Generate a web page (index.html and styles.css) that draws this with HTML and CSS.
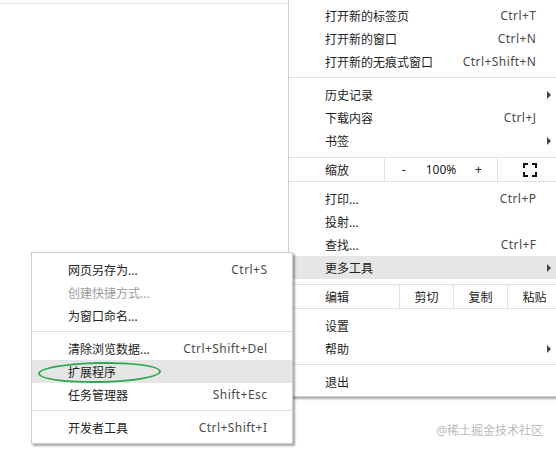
FILE: index.html
```html
<!DOCTYPE html>
<html lang="zh-CN">
<head>
    <meta charset="UTF-8">
    <meta name="viewport" content="width=device-width, initial-scale=1.0">
    <title>更多工具</title>
    <link rel="stylesheet" href="styles.css">
</head>
<body>
    <div class="page">
        <div class="page-line"></div>

        <!-- main browser menu -->
        <div class="menu main-menu">
            <div class="item"><span class="label">打开新的标签页</span><span class="key">Ctrl+T</span></div>
            <div class="item"><span class="label">打开新的窗口</span><span class="key">Ctrl+N</span></div>
            <div class="item"><span class="label">打开新的无痕式窗口</span><span class="key">Ctrl+Shift+N</span></div>
            <div class="sep"></div>
            <div class="item has-sub"><span class="label">历史记录</span></div>
            <div class="item"><span class="label">下载内容</span><span class="key">Ctrl+J</span></div>
            <div class="item has-sub"><span class="label">书签</span></div>
            <div class="split-row">
                <span class="label">缩放</span>
                <div class="cell zoom-ctrl">
                    <span>-</span>
                    <span>100%</span>
                    <span>+</span>
                </div>
                <div class="cell fullscreen">
                    <svg width="14" height="14" viewBox="0 0 14 14">
                        <path d="M1 5V1H5M9 1H13V5M13 9V13H9M5 13H1V9" fill="none" stroke="#111" stroke-width="2"/>
                    </svg>
                </div>
            </div>
            <div class="item"><span class="label">打印...</span><span class="key">Ctrl+P</span></div>
            <div class="item"><span class="label">投射...</span></div>
            <div class="item"><span class="label">查找...</span><span class="key">Ctrl+F</span></div>
            <div class="item has-sub active"><span class="label">更多工具</span></div>
            <div class="split-row">
                <span class="label">编辑</span>
                <div class="cell edit-cell">剪切</div>
                <div class="cell edit-cell">复制</div>
                <div class="cell edit-cell">粘贴</div>
            </div>
            <div class="item"><span class="label">设置</span></div>
            <div class="item has-sub"><span class="label">帮助</span></div>
            <div class="sep"></div>
            <div class="item"><span class="label">退出</span></div>
        </div>

        <!-- "more tools" submenu -->
        <div class="menu sub-menu">
            <div class="item"><span class="label">网页另存为...</span><span class="key">Ctrl+S</span></div>
            <div class="item disabled"><span class="label">创建快捷方式...</span></div>
            <div class="item"><span class="label">为窗口命名...</span></div>
            <div class="sep"></div>
            <div class="item"><span class="label">清除浏览数据...</span><span class="key">Ctrl+Shift+Del</span></div>
            <div class="item active"><span class="label">扩展程序</span></div>
            <div class="item"><span class="label">任务管理器</span><span class="key">Shift+Esc</span></div>
            <div class="sep"></div>
            <div class="item"><span class="label">开发者工具</span><span class="key">Ctrl+Shift+I</span></div>
        </div>

        <div class="mark-ring"></div>
        <div class="watermark">@稀土掘金技术社区</div>
    </div>
</body>
</html>
```

FILE: styles.css
```css
:root {
    --text: #222;
    --key-text: #4a4a4a;
    --line: #e0e0e0;
    --hover: #e6e6e6;
}

* {
    margin: 0;
    padding: 0;
    box-sizing: border-box;
}

body {
    margin: 0;
    background: #fff;
    font-family: 'Noto Sans', 'Noto Sans CJK SC', sans-serif;
    font-size: 12px;
    color: var(--text);
}

.page {
    position: relative;
    width: 556px;
    height: 449px;
    overflow: hidden;
}

.page-line {
    width: 288px;
    height: 4px;
    border-bottom: 1px solid #e4e4e4;
}

/* Menus */
.menu {
    position: absolute;
    background: #fff;
    border: 1px solid #cdcdcd;
    box-shadow: 2px 2px 2px rgba(0, 0, 0, 0.35);
}

.main-menu {
    left: 288px;
    top: -1px;
    width: 274px;
    padding: 4px 0 3px;
}

.sub-menu {
    left: 31px;
    top: 252px;
    width: 262px;
    padding: 5px 0 4px;
    z-index: 2;
}

.item {
    position: relative;
    display: flex;
    align-items: center;
    height: 23px;
    padding: 0 25px 0 36px;
    white-space: nowrap;
}

.item .label {
    flex: 1;
}

.item .key {
    color: var(--key-text);
    letter-spacing: 0.45px;
    margin-right: -0.45px;
}

.item.active {
    background: var(--hover);
}

.item.disabled {
    color: #9a9a9a;
}

.has-sub::after {
    content: '';
    position: absolute;
    left: 258px;
    top: 8px;
    border-left: 4px solid #444;
    border-top: 4px solid transparent;
    border-bottom: 4px solid transparent;
}

.sep {
    height: 1px;
    margin: 4px 0 5px;
    background: var(--line);
}

/* Zoom and edit rows */
.split-row {
    display: flex;
    height: 25px;
    margin: 5px 0;
    border-top: 1px solid var(--line);
    border-bottom: 1px solid var(--line);
}

.split-row .label {
    flex: 1;
    display: flex;
    align-items: center;
    padding: 1px 0 0 36px;
}

.cell {
    display: flex;
    align-items: center;
    justify-content: center;
    border-left: 1px solid var(--line);
}

.zoom-ctrl {
    width: 113px;
    display: grid;
    grid-template-columns: repeat(3, 1fr);
    justify-items: center;
}

.fullscreen {
    width: 64px;
}

.edit-cell {
    width: 54px;
}

/* Annotation */
.mark-ring {
    position: absolute;
    left: 38px;
    top: 362px;
    width: 123px;
    height: 21px;
    border: 2.5px solid #2fa94e;
    border-radius: 50%;
    transform: rotate(-1deg);
    z-index: 3;
}

.watermark {
    position: absolute;
    right: 13px;
    top: 421px;
    color: #bbb;
    font-size: 12px;
}
```
